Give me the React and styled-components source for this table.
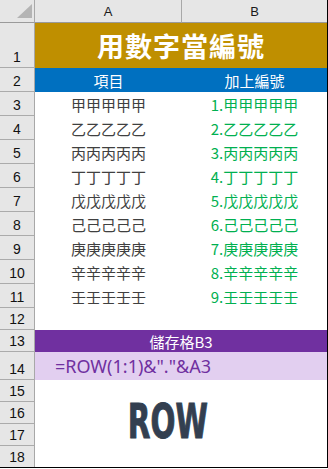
import React from 'react';
import styled, { createGlobalStyle } from 'styled-components';

const GlobalStyle = createGlobalStyle`
  html, body {
    margin: 0;
    padding: 0;
    background: #ffffff;
  }
  body {
    font-family: "Noto Sans", "Noto Sans CJK TC", sans-serif;
  }
`;

// header, row 1, rows 2-11, rows 12-13, row 14, rows 15-18
const Sheet = styled.div`
  width: 327px;
  height: 467px;
  border-right: 1px solid #000;
  border-bottom: 1px solid #000;
  background: #fff;
  display: grid;
  grid-template-columns: 35px 147px 145px;
  grid-template-rows: 23px 45px repeat(10, 24px) 22px 22px 28px repeat(4, 22px);
  overflow: hidden;
`;

const Corner = styled.div`
  background: #e6e6e6;
  border-right: 1px solid #a8a8a8;
  border-bottom: 1px solid #9a9a9a;
  display: flex;
  align-items: flex-end;
  justify-content: flex-end;
  padding: 0 2px 4px 0;
`;

const ColHead = styled.div`
  background: #e6e6e6;
  border-bottom: 1px solid #9a9a9a;
  border-right: ${props => (props.$last ? 'none' : '1px solid #a8a8a8')};
  display: flex;
  align-items: center;
  justify-content: center;
  font-family: "Liberation Sans", sans-serif;
  font-size: 13px;
  color: #1a1a1a;
`;

const RowHead = styled.div`
  grid-column: 1;
  grid-row: ${props => (props.$row ? props.$row + 1 : 'auto')};
  background: #e6e6e6;
  border-right: 1px solid #a8a8a8;
  border-bottom: 1px solid #ababab;
  display: flex;
  align-items: flex-end;
  justify-content: center;
  padding-bottom: 1px;
  font-family: "Liberation Sans", sans-serif;
  font-size: 14px;
  line-height: 18px;
  color: #111;
`;

const Cell = styled.div`
  display: flex;
  align-items: center;
  justify-content: center;
  background: ${props => props.$bg || '#fff'};
  color: ${props => props.$color || '#404040'};
  font-family: "Noto Sans CJK TC", sans-serif;
  font-size: 15px;
  line-height: 1;
  white-space: nowrap;
`;

const Merged = styled(Cell)`
  grid-column: 2 / 4;
`;

const Title = styled(Merged)`
  font-size: 27px;
  font-weight: 700;
  letter-spacing: 1px;
`;

const Formula = styled(Merged)`
  justify-content: flex-start;
  align-items: flex-end;
  padding: 0 0 5px 20px;
  font-family: "Noto Sans", "Noto Sans CJK TC", sans-serif;
  font-size: 18px;
`;

const BigBlock = styled(Merged)`
  grid-row: 16 / 20;
  padding: 0 27px 7px 0;
`;

const BigText = styled.span`
  display: inline-block;
  font-family: "DejaVu Sans Condensed", "DejaVu Sans", sans-serif;
  font-weight: 700;
  font-size: 48px;
  line-height: 1;
  color: #333f50;
  -webkit-text-stroke: 1px #333f50;
  transform: scaleX(0.68);
`;

const Tri = () => (
  <svg width="15" height="14" viewBox="0 0 15 14">
    <polygon points="15,0 15,14 0,14" fill="#b4b4b4" />
  </svg>
);

const stems = ['甲', '乙', '丙', '丁', '戊', '己', '庚', '辛', '壬'];

const App = () => (
  <>
    <GlobalStyle />
    <Sheet>
      <Corner><Tri /></Corner>
      <ColHead>A</ColHead>
      <ColHead $last>B</ColHead>

      <RowHead>1</RowHead>
      <Title $bg="#bf8f00" $color="#fff">用數字當編號</Title>

      <RowHead>2</RowHead>
      <Cell $bg="#0070c0" $color="#fff">項目</Cell>
      <Cell $bg="#0070c0" $color="#fff">加上編號</Cell>

      {stems.map((s, i) => (
        <React.Fragment key={s}>
          <RowHead>{i + 3}</RowHead>
          <Cell>{s.repeat(5)}</Cell>
          <Cell $color="#00b050">{`${i + 1}.${s.repeat(5)}`}</Cell>
        </React.Fragment>
      ))}

      <RowHead>12</RowHead>
      <Merged />

      <RowHead>13</RowHead>
      <Merged $bg="#7030a0" $color="#fff">儲存格B3</Merged>

      <RowHead>14</RowHead>
      <Formula $bg="#e2cff0" $color="#7030a0">=ROW(1:1)&amp;"."&amp;A3</Formula>

      {[15, 16, 17, 18].map(n => (
        <RowHead key={n} $row={n}>{n}</RowHead>
      ))}
      <BigBlock>
        <BigText>ROW</BigText>
      </BigBlock>
    </Sheet>
  </>
);

export default App;
